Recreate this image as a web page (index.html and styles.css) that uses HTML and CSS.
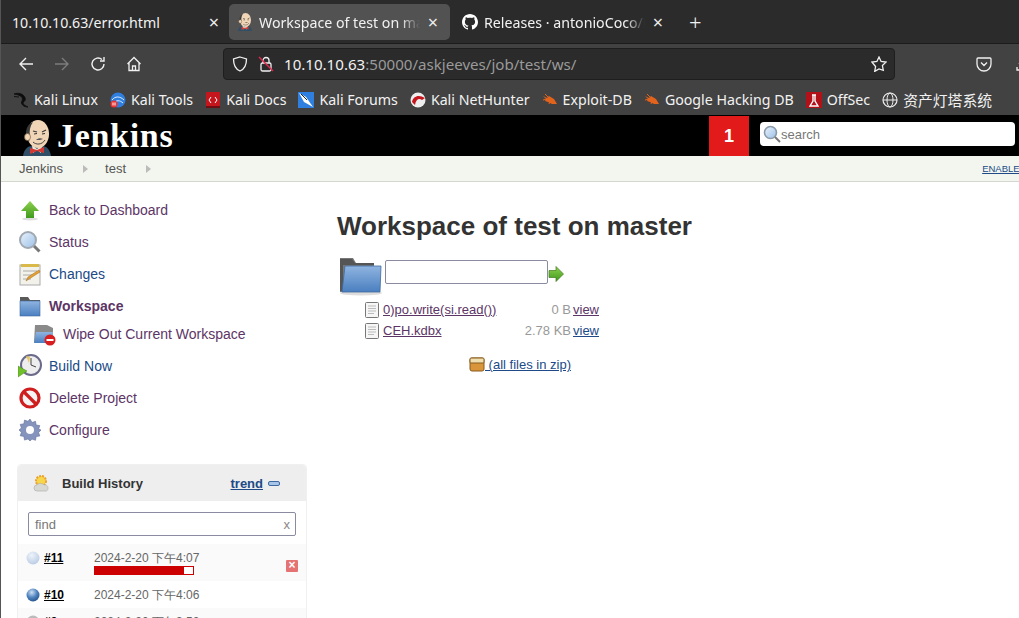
FILE: index.html
```html
<!DOCTYPE html>
<html lang="en">
<head>
<meta charset="utf-8">
<title>Workspace of test on master</title>
<link rel="stylesheet" href="styles.css">
</head>
<body>
<svg class="defs" width="0" height="0">
  <defs>
    <linearGradient id="gFolder" x1="0" y1="0" x2="0" y2="1"><stop offset="0" stop-color="#8fb4e0"/><stop offset="1" stop-color="#4a7fc0"/></linearGradient>
    <linearGradient id="gGreen" x1="0" y1="0" x2="0" y2="1"><stop offset="0" stop-color="#8fd14f"/><stop offset="1" stop-color="#3f9a1c"/></linearGradient>
    <linearGradient id="gGlass" x1="0" y1="0" x2="1" y2="1"><stop offset="0" stop-color="#eaf3fc"/><stop offset="1" stop-color="#9cc0e8"/></linearGradient>
    <radialGradient id="gBlue" cx=".4" cy=".3" r=".8"><stop offset="0" stop-color="#cfe0f3"/><stop offset=".5" stop-color="#4f84c0"/><stop offset="1" stop-color="#1f4a80"/></radialGradient>
    <radialGradient id="gPale" cx=".4" cy=".3" r=".8"><stop offset="0" stop-color="#eef3fa"/><stop offset="1" stop-color="#b4c8e2"/></radialGradient>
    <symbol id="doc" viewBox="0 0 14 16"><rect x=".5" y=".5" width="13" height="15" rx="1" fill="#f6f6f6" stroke="#777"/><path d="M3 4h8M3 6.500h8M3 9h8M3 11.500h6" stroke="#bbb" fill="none"/></symbol>
    <symbol id="butler" viewBox="0 0 32 36"><path d="M2 36c1-7 5-10 9-10h10c5 0 8 4 9 10z" fill="#2f4f66"/><path d="M11 25l5 4 5-4-1 8-4-3-4 3z" fill="#f0e6d6"/><path d="M9 28l7 2 7-3v6l-7-2-7 3z" fill="#d33833"/><ellipse cx="17" cy="14" rx="11" ry="14" fill="#f0d6b7"/><path d="M8 22C3 16 4 5 12 2c-3 4-4 9-3 14z" fill="#3a3a3a"/><ellipse cx="6.500" cy="17" rx="3" ry="3.500" fill="#f0d6b7" stroke="#7a5a40" stroke-width=".7"/><path d="M12 11l4 1M21 12l4-2" stroke="#3a3a3a" stroke-width="1.200" fill="none"/><path d="M13 14l3-.5M21 14l3-.5" stroke="#333" fill="none"/><path d="M12 22c3 3 9 3 12-2" stroke="#333" stroke-width=".9" fill="none"/><path d="M15 20c2-2 5-2 7-1l-3 1z" fill="#555"/></symbol>
  </defs>
</svg>

<div class="chrome">
  <div class="tabbar">
    <div class="tab">
      <span class="tab-title">10.10.10.63/error.html</span>
      <span class="tab-x">×</span>
    </div>
    <div class="tab tab-active">
      <svg class="fav" width="16" height="18"><use href="#butler"/></svg>
      <span class="tab-title fade">Workspace of test on master</span>
      <span class="tab-x">×</span>
    </div>
    <div class="tab tab-gh">
      <svg class="fav" width="16" height="16" viewBox="0 0 16 16"><path fill="#fff" d="M8 0C3.600 0 0 3.600 0 8c0 3.500 2.300 6.500 5.500 7.600.4.100.5-.2.500-.4v-1.400c-2.200.5-2.700-1-2.700-1-.4-.9-.9-1.200-.9-1.200-.7-.5.100-.5.100-.5.800.1 1.200.8 1.200.8.700 1.200 1.900.9 2.300.7.100-.5.300-.9.500-1.100-1.800-.2-3.600-.9-3.600-4 0-.9.300-1.600.8-2.100-.1-.2-.4-1 .1-2.100 0 0 .7-.2 2.200.8.600-.2 1.300-.3 2-.3s1.400.1 2 .3c1.500-1 2.200-.8 2.200-.8.400 1.100.2 1.900.1 2.100.5.600.8 1.300.8 2.100 0 3.100-1.900 3.700-3.700 3.900.3.300.6.800.6 1.500v2.200c0 .2.100.5.600.4C13.700 14.500 16 11.500 16 8c0-4.400-3.600-8-8-8z"/></svg>
      <span class="tab-title fade">Releases · antonioCoco/RunasCs</span>
      <span class="tab-x">×</span>
    </div>
    <span class="newtab">+</span>
  </div>

  <div class="toolbar">
    <svg class="tool" width="16" height="16" viewBox="0 0 16 16"><path d="M15 8H2M8 2L2 8l6 6" fill="none" stroke="#f0f0f0" stroke-width="1.400"/></svg>
    <svg class="tool" width="16" height="16" viewBox="0 0 16 16"><path d="M1 8h13M8 2l6 6-6 6" fill="none" stroke="#7c7c7c" stroke-width="1.400"/></svg>
    <svg class="tool" width="16" height="16" viewBox="0 0 16 16"><path d="M14 8a6 6 0 1 1-2-4.500M14 1v4h-4" fill="none" stroke="#f0f0f0" stroke-width="1.400"/></svg>
    <svg class="tool" width="16" height="16" viewBox="0 0 16 16"><path d="M1.500 8L8 1.500 14.500 8M3 7v7.500h10V7M6.500 14.500V10h3v4.500" fill="none" stroke="#f0f0f0" stroke-width="1.300"/></svg>
    <div class="urlbar">
      <svg width="16" height="16" viewBox="0 0 16 16"><path d="M8 1l6.500 2c0 6-1.500 10-6.500 12C3 13 1.500 9 1.500 3z" fill="none" stroke="#f0f0f0" stroke-width="1.300"/></svg>
      <svg class="lock" width="16" height="16" viewBox="0 0 16 16"><rect x="3" y="7" width="10" height="8" rx="1.500" fill="none" stroke="#f0f0f0" stroke-width="1.300"/><path d="M5 7V4.500a3 3 0 0 1 6 0V7" fill="none" stroke="#f0f0f0" stroke-width="1.300"/><path d="M1 1l14 14" stroke="#e22850" stroke-width="1.400"/></svg>
      <span class="url"><b>10.10.10.63</b>:50000/askjeeves/job/test/ws/</span>
      <svg class="star" width="16" height="16" viewBox="0 0 16 16"><path d="M8 1l2.100 4.500 4.900.6-3.600 3.400.9 4.900L8 13l-4.300 2.400.9-4.900L1 6.100l4.900-.6z" fill="none" stroke="#f0f0f0" stroke-width="1.300"/></svg>
    </div>
    <svg class="pocket" width="16" height="16" viewBox="0 0 16 16"><path d="M2 2h12a1 1 0 0 1 1 1v5a7 7 0 0 1-14 0V3a1 1 0 0 1 1-1zM5 6.500l3 3 3-3" fill="none" stroke="#f0f0f0" stroke-width="1.300"/></svg>
    <svg class="dl" width="16" height="16" viewBox="0 0 16 16"><path d="M2 11v3h12v-3M8 2v8M4 7l4 4 4-4" fill="none" stroke="#f0f0f0" stroke-width="1.300"/></svg>
  </div>

  <div class="bookmarks">
    <span class="bm"><svg width="17" height="16" viewBox="0 0 17 16"><path d="M1 2c4-1.500 8-.5 10 2 2 2.500 1.500 4.500 0 5.500-1.500 1-1 3 1 4l3 1.500c-3 0-6-1.500-6.500-4-.3-2 2-3 .5-5.500C8 3.500 4.500 2.500 1 2z" fill="#0c0c0c" stroke="#111" stroke-width=".9"/><path d="M1 4.500l5 .5" stroke="#111"/></svg>Kali Linux</span>
    <span class="bm"><svg width="16" height="16" viewBox="0 0 16 16"><circle cx="8" cy="8" r="7.500" fill="#2f7fe0"/><path d="M2 8c3-4 8-4 12 0M4 11c2-3 6-3 9 0" stroke="#dfeeff" fill="none"/><circle cx="4" cy="12" r="3.500" fill="#e33"/><path d="M3 10.500v3M5 10.500v3" stroke="#fff"/></svg>Kali Tools</span>
    <span class="bm"><svg width="16" height="16" viewBox="0 0 16 16"><rect x="1" width="14" height="16" rx="1" fill="#c4161c"/><rect x="1" y="14" width="14" height="2" fill="#6f0d12"/><path d="M6 5L4 8l2 3M10 5l2 3-2 3" stroke="#fff" fill="none"/></svg>Kali Docs</span>
    <span class="bm"><svg width="16" height="16" viewBox="0 0 16 16"><rect width="16" height="16" fill="#2f7fe0"/><path d="M1 1l7 4 7 10-9-5z" fill="#fff"/><path d="M3 2l6 6" stroke="#222"/></svg>Kali Forums</span>
    <span class="bm"><svg width="16" height="16" viewBox="0 0 16 16"><circle cx="8" cy="8" r="7.500" fill="#eee"/><path d="M2 10C3 4 9 2 15 6l-3 2C9 6 6 7 5 13z" fill="#c4161c"/></svg>Kali NetHunter</span>
    <span class="bm"><svg width="16" height="14" viewBox="0 0 16 14"><path d="M1 3l4 2 2-2 5 3 3 5-5 0-4-2-3-1 1-2z" fill="#e2631c"/><path d="M3 1l3 3M1 7l4-1M7 11l1-3" stroke="#e2631c"/></svg>Exploit-DB</span>
    <span class="bm"><svg width="16" height="14" viewBox="0 0 16 14"><path d="M1 3l4 2 2-2 5 3 3 5-5 0-4-2-3-1 1-2z" fill="#e2631c"/><path d="M3 1l3 3M1 7l4-1M7 11l1-3" stroke="#e2631c"/></svg>Google Hacking DB</span>
    <span class="bm"><svg width="16" height="16" viewBox="0 0 16 16"><rect width="16" height="16" fill="#b3111a"/><path d="M6 3h4M7 3v6l-3 5h8L9 9V3" stroke="#fff" stroke-width="1.400" fill="none"/></svg>OffSec</span>
    <span class="bm"><svg width="16" height="16" viewBox="0 0 16 16"><circle cx="8" cy="8" r="7" fill="none" stroke="#eee" stroke-width="1.200"/><ellipse cx="8" cy="8" rx="3" ry="7" fill="none" stroke="#eee"/><path d="M1 8h14" stroke="#eee"/></svg><span class="cjk">资产灯塔系统</span></span>
  </div>
</div>

<div class="page">
  <header class="jheader">
    <svg class="jlogo" width="32" height="36"><use href="#butler"/></svg>
    <span class="jname">Jenkins</span>
    <span class="spring"></span>
    <span class="badge">1</span>
    <div class="search">
      <svg width="18" height="18" viewBox="0 0 18 18"><circle cx="7.500" cy="7.500" r="6" fill="url(#gGlass)" stroke="#8a9aaa" stroke-width="1.600"/><path d="M12 12l5 5" stroke="#777" stroke-width="2"/></svg>
      <span>search</span>
    </div>
  </header>

  <nav class="crumbs">
    <span class="crumb">Jenkins</span><span class="tri"></span>
    <span class="crumb">test</span><span class="tri"></span>
    <span class="spring"></span>
    <a class="enable">ENABLE AUTO REFRESH</a>
  </nav>

  <div class="main">
    <aside class="side">
      <ul class="tasks">
        <li class="task">
          <svg width="24" height="24" viewBox="0 0 24 24"><ellipse cx="12" cy="21" rx="8" ry="1.500" fill="#ddd"/><path d="M12 3l9 10h-5v7H8v-7H3z" fill="url(#gGreen)"/></svg>
          <a class="visited">Back to Dashboard</a>
        </li>
        <li class="task">
          <svg width="24" height="24" viewBox="0 0 24 24"><path d="M15.500 15.500l6 6" stroke="#777" stroke-width="3"/><circle cx="10" cy="10" r="8" fill="url(#gGlass)" stroke="#a0a8b2" stroke-width="2"/></svg>
          <a class="visited">Status</a>
        </li>
        <li class="task">
          <svg width="24" height="24" viewBox="0 0 24 24"><rect x="2" y="3" width="20" height="20" fill="#f3f2ea" stroke="#aaa"/><rect x="3" y="2" width="18" height="3" fill="#d8b94a"/><path d="M5 9h14M5 13h10M5 17h8" stroke="#aaa"/><path d="M8 19l2-4 11-7 1 2-11 7z" fill="#e8a030" stroke="#9a6a20" stroke-width=".5"/></svg>
          <a class="link">Changes</a>
        </li>
        <li class="task">
          <svg width="24" height="24" viewBox="0 0 24 24"><path d="M2 3h8l2 3h10v16H2z" fill="#5a5a5a"/><rect x="2" y="7" width="20" height="15" fill="url(#gFolder)" stroke="#3f6aa0" stroke-width=".6"/></svg>
          <a class="visited strong">Workspace</a>
        </li>
        <li class="task sub">
          <svg width="24" height="24" viewBox="0 0 24 24"><path d="M3 3h12l6 3v6H7v8H2z" fill="#8a8a8a"/><path d="M4 10h17v11H2z" fill="url(#gFolder)"/><circle cx="18" cy="18" r="5.500" fill="#d81e1e"/><rect x="14.500" y="17" width="7" height="2" fill="#fff"/></svg>
          <a class="visited">Wipe Out Current Workspace</a>
        </li>
        <li class="task">
          <svg width="24" height="24" viewBox="0 0 24 24"><circle cx="13" cy="11" r="10" fill="#eee" stroke="#6a6a8a" stroke-width="2"/><path d="M13 4v7l5 2" stroke="#444" fill="none"/><path d="M8 2l4 1-1 6z" fill="#e8c860"/><path d="M0 12l9 5-9 6z" fill="#6fc02a" stroke="#4a8a18" stroke-width=".5"/></svg>
          <a class="link">Build Now</a>
        </li>
        <li class="task">
          <svg width="24" height="24" viewBox="0 0 24 24"><circle cx="12" cy="12" r="9" fill="#f4f4f4" stroke="#d01e1e" stroke-width="3.200"/><path d="M6 6l12 12" stroke="#d01e1e" stroke-width="3.200"/></svg>
          <a class="visited">Delete Project</a>
        </li>
        <li class="task">
          <svg width="24" height="24" viewBox="0 0 24 24"><path d="M12 1l2 3.500 3.500-1.200.6 3.700 3.700.6-1.200 3.500L23 12l-2.400 2.500 1.200 3.500-3.700.6-.6 3.700-3.500-1.200L12 23l-2-2.100-3.500 1.200-.6-3.700-3.700-.6 1.200-3.500L1 12l2.400-2.100-1.200-3.500 3.700-.6.6-3.700L10 3.300z" fill="#8494bc" stroke="#62709a" stroke-width=".6"/><circle cx="12" cy="12" r="4" fill="#fff"/></svg>
          <a class="visited">Configure</a>
        </li>
      </ul>

      <section class="history">
        <div class="hist-head">
          <svg width="20" height="20" viewBox="0 0 20 20"><circle cx="9" cy="8" r="5" fill="#f8d64a" stroke="#e8a030" stroke-dasharray="2 1" stroke-width="2"/><path d="M5 18a3 3 0 0 1 0-6c1-2 6-2 7 0a3 3 0 0 1 4 3c0 2-1 3-2 3z" fill="#d8d8d2" stroke="#aaa" stroke-width=".6"/></svg>
          <span class="hist-title">Build History</span>
          <span class="spring"></span>
          <a class="trend">trend</a>
          <span class="collapse"></span>
        </div>
        <div class="hist-body">
          <div class="find"><span>find</span><span class="find-x">x</span></div>
          <div class="build b-first">
            <svg class="ball" width="14" height="14"><circle cx="7" cy="7" r="6.500" fill="url(#gPale)"/></svg>
            <a class="num">#11</a>
            <div class="when">
              <span>2024-2-20 下午4:07</span>
              <div class="prog"><div class="prog-fill" style="width:91%"></div></div>
            </div>
            <span class="stop">×</span>
          </div>
          <div class="build">
            <svg class="ball" width="14" height="14"><circle cx="7" cy="7" r="6.500" fill="url(#gBlue)"/></svg>
            <a class="num">#10</a>
            <div class="when"><span>2024-2-20 下午4:06</span></div>
          </div>
          <div class="build b-alt">
            <svg class="ball" width="14" height="14"><circle cx="7" cy="7" r="6.500" fill="#bbb"/></svg>
            <a class="num">#9</a>
            <div class="when"><span>2024-2-20 下午3:50</span></div>
          </div>
        </div>
      </section>
    </aside>

    <main class="content">
      <h1 class="title">Workspace of test on master</h1>
      <div class="pathrow">
        <svg width="44" height="40" viewBox="0 0 44 40"><ellipse cx="22" cy="37" rx="21" ry="2.500" fill="#ddd"/><path d="M1 2h13l3 5h18v29H1z" fill="#777"/><path d="M1 3v32h3V9h31V7H16l-3-4z" fill="#555"/><path d="M6 10h36l-1 26H3z" fill="url(#gFolder)" stroke="#3f6aa0" stroke-width=".8"/></svg>
        <div class="pathbox"></div>
        <svg width="16" height="16" viewBox="0 0 16 16"><path d="M1 4.500h7V0.500l7.500 7.500L8 15.500v-4H1z" fill="url(#gGreen)" stroke="#3f7a1c" stroke-width=".7"/></svg>
      </div>
      <table class="files">
        <tr>
          <td class="f-ic"><svg width="14" height="16"><use href="#doc"/></svg></td>
          <td class="f-name"><a class="visited">0)po.write(si.read())</a></td>
          <td class="f-size">0 B</td>
          <td><a class="visited">view</a></td>
        </tr>
        <tr>
          <td class="f-ic"><svg width="14" height="16"><use href="#doc"/></svg></td>
          <td class="f-name"><a class="visited">CEH.kdbx</a></td>
          <td class="f-size">2.78 KB</td>
          <td><a class="link">view</a></td>
        </tr>
      </table>
      <div class="zip">
        <svg width="16" height="15" viewBox="0 0 16 15"><rect x="1" y="1" width="14" height="13" rx="2" fill="#d8953a" stroke="#8a5a1c"/><rect x="1" y="1" width="14" height="5" rx="1" fill="#efe0b0" stroke="#8a5a1c"/></svg>
        <a class="link">&nbsp;(all files in zip)</a>
      </div>
    </main>
  </div>
</div>
</body>
</html>
```

FILE: styles.css
```css
* { box-sizing: border-box; }
html, body { margin: 0; padding: 0; width: 1019px; height: 618px; overflow: hidden; background: #fff; }
body { font-family: "Liberation Sans", Arial, sans-serif; font-size: 14px; color: #333; border-left: 1px solid #555; position: relative; }
.defs { position: absolute; }
.spring { flex: 1; }

/* browser chrome */
.chrome { background: #424242; color: #f2f2f2; font-family: "Noto Sans", sans-serif; }
.tabbar { height: 44px; background: #2b2b2b; border-bottom: 1px solid #1c1c1c; display: flex; align-items: center; padding-top: 1px; white-space: nowrap; }
.tab { width: 228px; height: 36px; display: flex; align-items: center; padding: 0 8px 0 11px; font-size: 14.200px; border-radius: 5px; flex: none; }
.tab-active { background: #525252; width: 221px; padding: 0 10px 0 8px; gap: 6px; }
.tab-gh { width: 226px; gap: 6px; padding: 0 11px 0 12px; }
.tab-title { flex: 1; overflow: hidden; min-width: 0; }
.fade { -webkit-mask-image: linear-gradient(to right, #000 88%, transparent 100%); mask-image: linear-gradient(to right, #000 88%, transparent 100%); }
.tab-x { font-size: 18px; line-height: 18px; width: 14px; text-align: center; color: #eee; flex: none; }
.fav { flex: none; }
.newtab { font-size: 22px; font-weight: 300; margin-left: 13px; line-height: 1; color: #f2f2f2; }

.toolbar { height: 39px; display: flex; align-items: center; padding-left: 17px; gap: 20px; }
.urlbar { width: 672px; height: 32px; position: absolute; left: 222px; background: #2b2b2b; border: 1px solid #1e1e1e; border-radius: 4px; display: flex; align-items: center; padding: 0 7px 0 8px; gap: 10px; }
.url { flex: 1; font-size: 15.100px; color: #9a9a9a; white-space: nowrap; }
.url b { font-weight: 400; color: #f2f2f2; }
.pocket { position: absolute; left: 975px; }
.dl { position: absolute; left: 1014px; }

.bookmarks { height: 32px; display: flex; align-items: center; padding: 1px 0 0 12px; font-size: 14.200px; white-space: nowrap; gap: 12px; }
.bm { display: inline-flex; align-items: center; gap: 5px; }
.bm:first-child { gap: 4px; }
.cjk { font-family: "Noto Sans CJK SC", sans-serif; font-size: 14.800px; }

/* Jenkins header */
.jheader { height: 41px; background: #000; display: flex; align-items: flex-end; padding-left: 20px; }
.jlogo { flex: none; display: block; }
.jname { font-family: "Liberation Serif", serif; font-weight: 700; font-size: 34px; line-height: 37px; color: #fff; margin-left: 4px; align-self: center; letter-spacing: .7px; }
.badge { width: 40px; height: 40px; background: #e31a1a; color: #fff; font-weight: 700; font-size: 18px; display: flex; align-items: center; justify-content: center; margin-right: 11px; }
.search { width: 255px; height: 24px; background: #fff; border-radius: 4px; display: flex; align-items: center; color: #777; font-size: 13px; padding-left: 3px; margin: 0 4px 10px 0; align-self: flex-end; }

.crumbs { height: 26px; background: #f3f6ef; border-bottom: 1px solid #d3d7cf; display: flex; align-items: center; padding-left: 18px; font-size: 13px; color: #555; white-space: nowrap; overflow: hidden; }
.crumb { margin-right: 20px; }
.tri { width: 0; height: 0; border-left: 5px solid #bbb; border-top: 4px solid transparent; border-bottom: 4px solid transparent; margin-right: 17px; }
.enable { font-size: 9.500px; color: #204a87; text-decoration: underline; margin-right: -77px; }

.main { display: flex; }
.side { width: 306px; padding: 12px 0 0 16px; flex: none; }
.tasks { list-style: none; margin: 0; padding: 0; }
.task { height: 32px; display: flex; align-items: center; gap: 7px; padding-left: 1px; }
.task.sub { height: 24px; padding-left: 15px; margin-bottom: 4px; }
a { text-decoration: none; }
.link { color: #204a87; }
.visited { color: #5c3566; }
.strong { font-weight: 700; }

.history { margin-top: 18px; width: 290px; border: 1px solid #f0f0f0; border-radius: 4px 4px 0 0; background: #fff; }
.hist-head { height: 36px; background: #eee; display: flex; align-items: center; padding: 0 26px 0 14px; gap: 10px; font-size: 13px; font-weight: 700; border-radius: 4px 4px 0 0; }
.hist-title { color: #333; }
.trend { color: #204a87; text-decoration: underline; }
.collapse { width: 12px; height: 5px; background: #a8c4e8; border: 1px solid #3f6aa0; border-radius: 2px; margin-left: -5px; }
.hist-body { padding-top: 11px; }
.find { margin: 0 10px 8px; height: 24px; border: 1px solid #8a8aa0; border-radius: 2px; display: flex; justify-content: space-between; align-items: center; padding: 0 5px 0 6px; color: #777; font-size: 13px; }
.find-x { color: #888; }
.build { display: flex; align-items: flex-start; padding: 7px 0 0 8px; height: 27px; font-size: 12px; position: relative; }
.b-first { height: 37px; background: #fafafa; }
.b-alt { background: #fafafa; }
.ball { flex: none; }
.num { width: 50px; margin-left: 4px; color: #000; font-weight: 700; text-decoration: underline; }
.when { color: #666; line-height: 14px; }
.prog { width: 100px; height: 9px; border: 1px solid #c00; margin-top: 1px; background: #fff; }
.prog-fill { height: 100%; background: #c00; }
.stop { position: absolute; left: 268px; top: 16px; width: 12px; height: 12px; background: #e57373; color: #fff; font-size: 12px; line-height: 11px; text-align: center; border-radius: 1px; font-weight: 700; }

.content { flex: 1; padding: 28px 0 0 30px; }
.title { margin: 0; font-size: 26px; font-weight: 700; line-height: 32px; color: #333; }
.pathrow { display: flex; align-items: flex-start; margin-top: 14px; padding-left: 2px; }
.pathbox { width: 163px; height: 24px; margin: 4px 0 0 2px; border: 1px solid #8a8aa0; border-radius: 2px; background: #fff; }
.pathrow svg:last-child { margin-top: 10px; }
.files { border-collapse: collapse; margin: 3px 0 0 28px; font-size: 13px; }
.files td { padding: 0; height: 21px; }
.f-ic { width: 18px; }
.f-ic svg { display: block; }
.f-name { width: 115px; }
.f-size { width: 75px; text-align: right; color: #999; padding-right: 2px !important; }
.files a { text-decoration: underline; }
.zip { margin: 16px 0 0 132px; display: flex; align-items: center; font-size: 13px; }
.zip a { text-decoration: underline; }
```
